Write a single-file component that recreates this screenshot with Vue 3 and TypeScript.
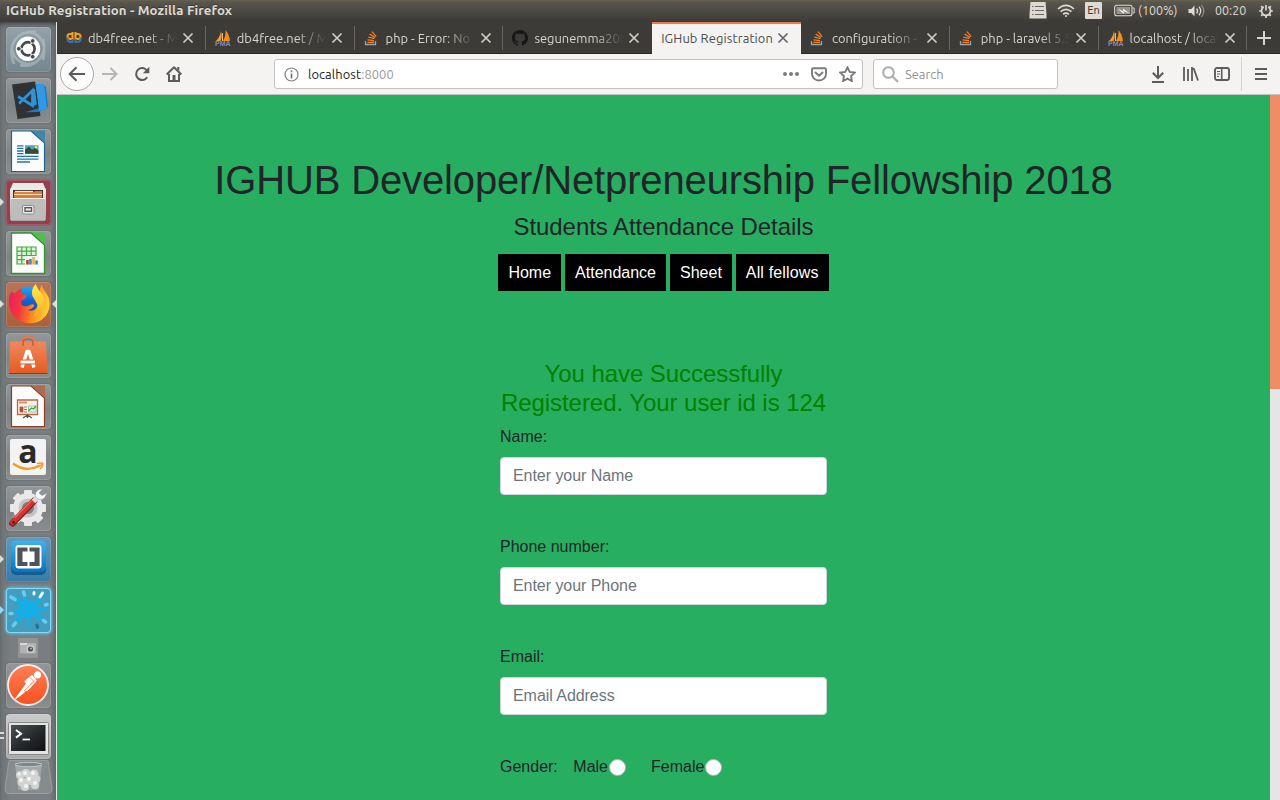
<script setup lang="ts">
type Favicon = 'db' | 'pma' | 'so' | 'gh' | ''
interface Tab { title: string; icon: Favicon; active?: boolean }

const tabs: Tab[] = [
  { title: 'db4free.net - MySQL', icon: 'db' },
  { title: 'db4free.net / MySQL', icon: 'pma' },
  { title: 'php - Error: No query', icon: 'so' },
  { title: 'segunemma2003', icon: 'gh' },
  { title: 'IGHub Registration', icon: '', active: true },
  { title: 'configuration - PHP', icon: 'so' },
  { title: 'php - laravel 5.5', icon: 'so' },
  { title: 'localhost / localhost', icon: 'pma' },
]

const links: string[] = ['Home', 'Attendance', 'Sheet', 'All fellows']
const fields = [
  { label: 'Name:', hint: 'Enter your Name' },
  { label: 'Phone number:', hint: 'Enter your Phone' },
  { label: 'Email:', hint: 'Email Address' },
]
const teeth: number[] = [0, 45, 90, 135, 180, 225, 270, 315]
</script>

<template>
  <div class="desktop">
    <header class="panel">
      <span class="window-title">IGHub Registration - Mozilla Firefox</span>
      <div class="indicators">
        <svg class="i-list" width="18" height="17" viewBox="0 0 18 17"><path d="M1.5 0h15l1 12v4.5H.5V12z" fill="#dfdbd2" /><path d="M3 4.500h1.500M6 4.500h9M3 8.500h1.500M6 8.500h9M3 12.500h1.500M6 12.500h9" stroke="#6b6860" stroke-width="1.2" /></svg>
        <svg class="i-wifi" width="18" height="14" viewBox="0 0 18 14" fill="none" stroke="#dfdbd2" stroke-width="1.600"><path d="M1 5Q9-2.400 17 5M3.600 7.700q5.400-4.800 10.800 0M6.100 10.300q2.900-2.500 5.800 0" /><circle cx="9" cy="12" r="1" fill="#dfdbd2" stroke="none" /></svg>
        <span class="lang">En</span>
        <svg class="i-bat" width="21" height="13" viewBox="0 0 21 13"><rect x=".7" y="1.200" width="17.300" height="10.600" rx="2" fill="none" stroke="#dfdbd2" stroke-width="1.100" /><rect x="2.500" y="3" width="13.700" height="7" fill="#96938b" /><path d="M18.800 4h1.400v5h-1.400" fill="none" stroke="#dfdbd2" /><path d="M3.500 4.500 9.500 7.500 9 4.500l6.500 5-6-2.500.5 3z" fill="#fff" /></svg>
        <span class="pct">(100%)</span>
        <svg class="i-vol" width="17" height="14" viewBox="0 0 17 14" fill="none" stroke="#dfdbd2"><path d="M.5 5h2.800L6.500 1.600v10.800L3.300 9H.5z" fill="#dfdbd2" stroke="none" /><path d="M8.600 4.500q2 2.500 0 5M11 2.700q3.400 4.300 0 8.600" stroke-width="1.300" /><path d="M13.500 1q4.600 6 0 12" stroke="#96928a" stroke-width="1.200" /></svg>
        <span class="clock">00:20</span>
        <svg class="i-gear" width="14" height="14" viewBox="0 0 14 14" fill="none" stroke="#dfdbd2"><path d="M4.700 3.100a4.500 4.500 0 1 0 4.600 0" stroke-width="1.700" /><path d="M7 1v5.500" stroke-width="1.600" /><path d="M2.200 2.200l1.600 1.600M11.800 2.200l-1.600 1.600M.2 7h2M11.800 7h2M2.200 11.800l1.600-1.600M11.800 11.800l-1.600-1.600M7 12v2" stroke-width="1.700" /></svg>
      </div>
    </header>

    <div class="workspace">
      <aside class="launcher">
        <svg width="0" height="0" class="defs">
          <defs>
            <linearGradient id="fox" x1="0" y1=".3" x2="1" y2=".45"><stop offset="0" stop-color="#ec1c60" /><stop offset=".3" stop-color="#f5373c" /><stop offset=".62" stop-color="#ff8a1f" /><stop offset="1" stop-color="#ffd433" /></linearGradient>
            <linearGradient id="flame" x1="0" y1="0" x2="0" y2="1"><stop offset="0" stop-color="#fff04d" /><stop offset="1" stop-color="#ffa71f" /></linearGradient>
            <linearGradient id="globe" x1="0" y1="0" x2="0" y2="1"><stop offset="0" stop-color="#1fa6f3" /><stop offset=".5" stop-color="#1561d2" /><stop offset="1" stop-color="#2b3a96" /></linearGradient>
            <linearGradient id="bag" x1="0" y1="0" x2="0" y2="1"><stop offset="0" stop-color="#f0895d" /><stop offset="1" stop-color="#e35b20" /></linearGradient>
            <linearGradient id="blue" x1="0" y1="0" x2="0" y2="1"><stop offset="0" stop-color="#41b3ec" /><stop offset="1" stop-color="#0874c0" /></linearGradient>
            <linearGradient id="post" x1="0" y1="0" x2="0" y2="1"><stop offset="0" stop-color="#ff8055" /><stop offset="1" stop-color="#f9501e" /></linearGradient>
            <linearGradient id="steel" x1="0" y1="0" x2="0" y2="1"><stop offset="0" stop-color="#eeeeec" /><stop offset="1" stop-color="#a5a5a3" /></linearGradient>
            <linearGradient id="screen" x1="0" y1="0" x2="1" y2="1"><stop offset="0" stop-color="#4b5254" /><stop offset=".55" stop-color="#24282a" /><stop offset="1" stop-color="#111" /></linearGradient>
          </defs>
        </svg>

        <div class="tile dash"><svg viewBox="0 0 45 45">
          <path d="M8 37C0 17 12 3 30 5M15 7C31 1 42 14 37 33M37 12c5 16-8 30-23 26M6 18C5 35 22 41 32 34" fill="none" stroke="#bbc7ca" stroke-width="2.600" opacity=".55" />
          <circle cx="22" cy="21.800" r="12.200" fill="#fff" /><circle cx="22" cy="21.800" r="6.600" fill="none" stroke="#434b4e" stroke-width="2.700" />
          <path d="M22 21.800H11M22 21.800l5.500-9.500M22 21.800l5.500 9.500" stroke="#fff" stroke-width="1.200" />
          <g fill="#434b4e" stroke="#fff" stroke-width=".8"><circle cx="12.800" cy="21.800" r="2.300" /><circle cx="26.700" cy="13.900" r="2.300" /><circle cx="26.700" cy="29.700" r="2.300" /></g>
        </svg></div>

        <div class="tile"><svg viewBox="0 0 45 45">
          <path d="M6 6.500 29 3.500 34.500 38 11.500 41z" fill="#303133" />
          <path d="M30 6h6l4 3 2 20-9 5L19 34.300 33.500 30z" fill="#1c79c9" /><path d="M30 6h8l3 24-8 3z" fill="#2f9ae6" />
          <path d="M12 18.500 26.500 27.500V12.500L13 25.500" fill="none" stroke="#2d94dc" stroke-width="2.700" /><path d="M26 12l3-1.200 1.800 16-4.300 1.500z" fill="#2d94dc" />
        </svg></div>

        <div class="tile"><svg viewBox="0 0 45 45">
          <path d="M24 1.500h15V13z" fill="#4285ad" /><path d="M5.500 2H25l13.500 12v28.500h-33z" fill="#fcfcfc" stroke="#216796" stroke-width="1.200" />
          <rect x="19" y="16.200" width="13.500" height="8.500" fill="#4aa4d2" /><path d="M19 24.700v-4l4-3 3 3 3-2 3.500 3v3z" fill="#394a30" /><circle cx="30" cy="18" r="1.500" fill="#f3dc4e" />
          <path d="M11 16.800h6.500M11 19.400h6.500M11 22h6.500M11 24.600h6.500M11 27.400h21.500M11 30.200h21.500M11 33h13" stroke="#2175a8" stroke-width="1.300" />
        </svg></div>

        <div class="tile files"><i class="mark left"></i><svg viewBox="0 0 45 45">
          <path d="M7 3h30l3 7H4z" fill="#e9e9e7" /><rect x="4" y="8" width="36" height="33" rx="2" fill="url(#steel)" /><path d="M7 10h30v8H7z" fill="#45312c" />
          <path d="M8 12h19l3-1h6v7H8z" fill="#e27933" /><path d="M8 14.500h28" stroke="#f7dfb8" /><path d="M9 11.500h18" stroke="#faeed6" stroke-width="1.200" /><path d="M5 18h34v22H5z" fill="#bdbdbb" /><path d="M5 18.500h34" stroke="#f2f2f1" />
          <rect x="16.500" y="25.500" width="11.500" height="8.500" rx="1.500" fill="#eee" stroke="#8b8b8b" /><rect x="19" y="27.700" width="6.500" height="3.600" fill="#e6e6e6" stroke="#575757" stroke-width="1.400" />
        </svg></div>

        <div class="tile"><svg viewBox="0 0 45 45">
          <path d="M24 1.500h15V13z" fill="#56bb4c" /><path d="M5.500 2H25l13.500 12v28.500h-33z" fill="#fcfcfc" stroke="#30952c" stroke-width="1.300" />
          <path d="M11 16h19v17H11z" fill="#dff4dc" /><path d="M11 16h19v17H11zM15.800 16v17M20.500 16v17M25.200 16v17M11 20.200h19M11 24.500h19M11 28.700h19" fill="none" stroke="#47ab3f" stroke-width="1.200" /><path d="M19 25h13.500v9H19z" fill="#eef3f7" />
          <path d="M20.200 29h2.500v4.500h-2.500z" fill="#b13c1f" /><path d="M23.200 28h2.500v5.500h-2.500zM29.300 29.500h2.500v4h-2.500z" fill="#3a83c4" /><path d="M26.300 26h2.500v7.500h-2.500z" fill="#e6b333" />
        </svg></div>

        <div class="tile firefox"><i class="mark left"></i><i class="mark right"></i><svg viewBox="0 0 45 45">
          <circle cx="22" cy="19" r="14.500" fill="url(#globe)" />
          <path d="M5.500 9.500Q7 12 9.500 11q3-4 7-4.500-1.500 2-1 5 4 1 5 2.500-.5 2.500-5 4.500-1.500 4 2 5.500 3 1 6.500-1 3-1.500 4.500.5-2.500 4-7 4.500 7 2.500 10-4 2-6-1-11 3 1 4.500 4-3-7 .5-14 2 5 5 8.500 4 6 3 13.500-2 11-12 15-11 3.500-20-2.500-8-6-8.500-16Q2.500 14 5.500 9.500z" fill="url(#fox)" />
          <path d="M29.500 2q-5 6-3 12 3 5 5 9 0 8-6 12 9-1 12.500-9 2-7-1.500-13-5-6-7-11z" fill="url(#flame)" />
        </svg></div>

        <div class="tile"><svg viewBox="0 0 45 45">
          <path d="M16 13V8q0-4.500 6-4.500T28 8v5" fill="none" stroke="#e27852" stroke-width="2.300" /><path d="M4 8.500h36l1.500 31q0 1.500-2 1.500h-35Q3 41 3 39.500z" fill="url(#bag)" /><path d="M3 40.500h38.500" stroke="#9a3b1b" />
          <path d="M17 13v-3q0-4 5-4t5 4v3" fill="none" stroke="#b95534" stroke-width="1.200" /><path d="M16 34.500 21 18.500h2l5 16" fill="none" stroke="#fff" stroke-width="3.400" stroke-linejoin="round" /><path d="M14 26.500h16v5H14z" fill="#e9672f" /><path d="M14.500 29h14.500" stroke="#fff" stroke-width="2.800" />
        </svg></div>

        <div class="tile"><svg viewBox="0 0 45 45">
          <path d="M24 1.500h15V13z" fill="#a96d50" /><path d="M5.500 2H25l13.500 12v28.500h-33z" fill="#fcfcfc" stroke="#8d4021" stroke-width="1.200" /><path d="M11.500 16h20v14.500h-20z" fill="#fbf0e9" stroke="#bb6743" stroke-width="1.300" />
          <path d="M13 18.500h8" stroke="#d98e65" stroke-width="2" /><path d="M14 23h3v5h-3zM18 23h3M18 25.500h3M18 28h3" fill="#ae5535" stroke="#ae5535" stroke-width=".8" /><path d="M22.500 22h7.500v6h-7.500z" fill="#eaf5e4" stroke="#88a27b" stroke-width=".6" /><path d="M22.500 27l3-3 2 1 2.500-3" fill="none" stroke="#36a449" stroke-width="1.300" />
          <path d="M17 34l4.500-3 4.500 3M21.500 31v3" fill="none" stroke="#555" stroke-width="1.400" />
        </svg></div>

        <div class="tile"><svg viewBox="0 0 45 45">
          <rect x="4" y="4" width="36" height="36" rx="2" fill="#f3f3f3" /><text x="22" y="28" text-anchor="middle" class="amazon-a">a</text>
          <path d="M7 28.500q13 9.500 27 2" fill="none" stroke="#f79b1e" stroke-width="2.200" /><path d="M31 28.500q5-1 6 0 0 3-3 5.500M36.500 29l-3 2" fill="none" stroke="#f79b1e" stroke-width="1.500" />
        </svg></div>

        <div class="tile"><svg viewBox="0 0 45 45">
          <g fill="#e9e9e9"><circle cx="22" cy="22" r="15" /><rect v-for="t in teeth" :key="t" x="18" y="4" width="8" height="7" rx="1" :transform="`rotate(${t} 22 22)`" /></g>
          <circle cx="22" cy="22" r="9.500" fill="#c4c4c4" /><circle cx="22" cy="22" r="6" fill="#7c8082" />
          <path d="M6.500 37.200 28 15" stroke="#7f1414" stroke-width="6.500" stroke-linecap="round" /><path d="M6.500 36.700 27.500 15" stroke="#d23430" stroke-width="5" stroke-linecap="round" /><path d="M9 31.500 25.500 14.500" stroke="#f06b63" stroke-width="1.300" />
          <path d="M27.500 15.500l5-5" stroke="#dedede" stroke-width="5" /><path d="M36.500 3q-7 0-7.500 7 4 6 9.500 2l2.500-5-5 2.500-3-2.500z" fill="#f8f8f8" stroke="#999" stroke-width=".6" /><circle cx="7.500" cy="36.500" r="1.400" fill="#651111" />
        </svg></div>

        <div class="tile brackets"><i class="mark left"></i><svg viewBox="0 0 45 45">
          <rect x="5" y="5" width="35" height="33" rx="5" fill="#125d96" /><rect x="5" y="3.500" width="35" height="31.500" rx="5" fill="url(#blue)" /><rect x="9.500" y="8" width="26" height="23.500" rx="3" fill="#fff" />
          <rect x="11.300" y="10.500" width="22.300" height="18.500" fill="#505459" /><rect x="16.500" y="14.500" width="12" height="10.500" fill="#fff" /><path d="M22.500 10v5.500M22.500 24v6" stroke="#fff" stroke-width="2" />
        </svg></div>

        <div class="tile splash"><i class="mark left bluish"></i><svg viewBox="0 0 45 45">
          <ellipse cx="22" cy="21.500" rx="10" ry="8.500" fill="#16aee6" />
          <g stroke="#16aee6" stroke-linecap="round" fill="none"><path d="M16 17 7 9.500M20 14 18 6M29 15l7-7M30 22l10-1M29 26l9 7M23 28l-1 10M17 27l-8 9M13 23l-8 2" stroke-width="3" /><path d="M18 17l-6-5M28 17l5-5M28 25l5 4M17 25l-4 5" stroke-width="5" /></g>
          <g stroke="#69cdf0" stroke-width="3.600" stroke-linecap="round"><path d="M5 9l4 2.500M17.500 4l1 3M4 25.500h2M37.500 32.500l2 1.500M7.500 37.500l2-2.500M39.500 17l1.500-.5" /></g><path d="M36.500 5l-2.500 4M28 4.500v1.500" stroke="#e5f8ff" stroke-width="3" stroke-linecap="round" /><path d="M31 37l.5 2.500" stroke="#17769f" stroke-width="3.200" stroke-linecap="round" />
        </svg></div>

        <svg class="mini" width="20" height="20" viewBox="0 0 20 20"><rect width="20" height="20" fill="#929494" /><rect x="2" y="5" width="16" height="10.500" rx="1" fill="#b1b2b2" /><path d="M2 6h7" stroke="#d9d9d9" stroke-width="2" /><circle cx="12.500" cy="11" r="4" fill="#d0d0d0" /><circle cx="12.500" cy="11" r="2.600" fill="#4f5356" /><circle cx="13" cy="10.500" r="1" fill="#a8bac5" /></svg>

        <div class="tile"><svg viewBox="0 0 45 45">
          <circle cx="22" cy="22" r="20" fill="url(#post)" stroke="#f5eeea" stroke-width="1.800" />
          <circle cx="31.500" cy="11.800" r="3.600" fill="#fff" /><path d="M28 14 20 20.500" stroke="#fff" stroke-width="6" /><path d="M21 19l4 3-7 8-8.500 6.500-.5-1 6-8z" fill="#fff" /><path d="M29.500 17.500 21 27" stroke="#fff" stroke-width="2.200" stroke-linecap="round" />
          <path d="M28.500 18 18 28M24 14.500l4 4" fill="none" stroke="#ff7547" stroke-width=".8" />
        </svg></div>

        <div class="tile terminal"><i class="dash-mark"></i><svg viewBox="0 0 45 45">
          <rect x="2.500" y="8.500" width="40" height="32" rx="1" fill="#e4e4e2" stroke="#888" /><rect x="5" y="11" width="34.500" height="26" fill="url(#screen)" /><path d="M10 16l5 3.800-5 3.800" fill="none" stroke="#fff" stroke-width="2" /><path d="M16.500 25.500H24" stroke="#fff" stroke-width="1.700" />
        </svg></div>

        <div class="trash"><svg width="49" height="34" viewBox="0 0 49 34">
          <path d="M5 .5h39l4 28q0 5-4 5H5q-4 0-4-5z" fill="#92999b" fill-opacity=".5" stroke="#9a9fa0" /><path d="M11 4h27l-3 24q0 2-3 2H17q-3 0-3-2z" fill="#b5babb" opacity=".6" /><ellipse cx="24.500" cy="4.500" rx="13.500" ry="2.200" fill="#7f8688" stroke="#c3c8c8" />
          <g fill="#d3d4d2"><circle cx="16" cy="15" r="4" /><circle cx="22" cy="13" r="4" /><circle cx="30" cy="14" r="4.500" /><circle cx="33" cy="19" r="3.500" /><circle cx="18" cy="22" r="4.500" /><circle cx="26" cy="20" r="5" /><circle cx="31" cy="25" r="4" /><circle cx="21" cy="27" r="4" /></g>
          <g fill="#f5f5f3"><circle cx="21" cy="13" r="2" /><circle cx="29" cy="13" r="2" /><circle cx="17" cy="20" r="2" /><circle cx="25" cy="19" r="2" /><circle cx="31" cy="23" r="2" /><circle cx="22" cy="26" r="2" /><circle cx="15" cy="14" r="1.500" /></g>
        </svg></div>
      </aside>

      <main class="browser">
        <nav class="tabs">
          <div v-for="t in tabs" :key="t.title" class="tab" :class="{ active: t.active }">
            <svg v-if="t.icon === 'db'" class="favicon" viewBox="0 0 16 16" fill="none" stroke-width="2.100"><path d="M6.500 2v7H4a2.500 2.500 0 0 1 0-5h2.500M9.500 2v7H12a2.500 2.500 0 0 0 0-5H9.500" stroke="#f5a21b" /><path d="M1.300 7.500q0 4.500 3.500 4.500h1.700V9M14.800 7.500q0 4.500-3.500 4.500H9.500V9" stroke="#3672ad" /></svg>
            <svg v-else-if="t.icon === 'pma'" class="favicon" viewBox="0 0 16 16"><path d="M6 1q1.500 6-.5 10H1q4-4 5-10z" fill="#f19b32" /><path d="M10.500 0q4 5 4.500 11H8q3-5 2.500-11z" fill="#f28c1b" /><path d="M7.500 3v8" stroke="#e8bc75" /><text x="0" y="15.500" class="pma-word">PMA</text></svg>
            <svg v-else-if="t.icon === 'so'" class="favicon" viewBox="0 0 16 16" fill="none"><path d="M1.500 11v3.500h10V11" stroke="#9da4a9" stroke-width="1.300" /><path d="M3.500 12.300h6.500M3.600 9.900l6.500.7M4.200 7l6.200 1.700M5.700 4.100l5.400 3.400M8 1.700l4.200 5" stroke="#f48024" stroke-width="1.250" /></svg>
            <svg v-else-if="t.icon === 'gh'" class="favicon" viewBox="0 0 16 16"><path fill="#181717" d="M8 0C3.580 0 0 3.580 0 8c0 3.540 2.290 6.530 5.470 7.590.4.070.55-.17.55-.38v-1.490c-2.010.37-2.530-.49-2.690-.94-.09-.23-.48-.94-.82-1.130-.28-.15-.68-.52-.01-.53.63-.01 1.080.58 1.230.82.72 1.210 1.870.87 2.330.66.070-.52.28-.87.51-1.070-1.780-.2-3.640-.89-3.640-3.950 0-.87.31-1.590.82-2.150-.08-.2-.36-1.020.08-2.120 0 0 .67-.21 2.200.82a7.600 7.600 0 0 1 4 0c1.530-1.040 2.200-.82 2.200-.82.44 1.100.16 1.920.08 2.120.51.56.82 1.270.82 2.150 0 3.070-1.870 3.750-3.650 3.950.29.25.54.73.54 1.480v2.200c0 .21.15.46.55.38A8 8 0 0 0 8 0z" /></svg>
            <span class="tab-title">{{ t.title }}</span>
            <svg class="close" width="12" height="12" viewBox="0 0 12 12"><path d="M1.500 1.500l9 9m0-9l-9 9" stroke="currentColor" stroke-width="1.700" /></svg>
          </div>
          <div class="new-tab"><svg width="14" height="14" viewBox="0 0 14 14"><path d="M7 0v14M0 7h14" stroke="#d8d6d0" stroke-width="2" /></svg></div>
        </nav>

        <div class="toolbar">
          <div class="back"><svg width="18" height="16" viewBox="0 0 18 16"><path d="M17 8H2M8.500 1.300 1.700 8l6.800 6.700" fill="none" stroke="#5b5b5b" stroke-width="2" /></svg></div>
          <svg class="fwd" width="16" height="14" viewBox="0 0 16 14"><path d="M0 7h14M8.500 1l6 6-6 6" fill="none" stroke="#b6b5b4" stroke-width="2" /></svg>
          <svg class="reload" width="16" height="16" viewBox="0 0 16 16"><path d="M13.200 11.200A6 6 0 1 1 13 4.500" fill="none" stroke="#5b5b5b" stroke-width="2" /><path d="M15.300.8v6.500H8.800z" fill="#5b5b5b" /></svg>
          <svg class="home" width="16" height="16" viewBox="0 0 16 16"><path d="M.7 8.500 8 1.300l7.300 7.200" fill="none" stroke="#5b5b5b" stroke-width="2" stroke-linejoin="round" /><path d="M3 8v7h10V8" fill="none" stroke="#5b5b5b" stroke-width="2" /><path d="M6.500 9h3v6h-3z" fill="#5b5b5b" /><path d="M11.300 1h2v4l-2-2z" fill="#5b5b5b" /></svg>
          <div class="urlbar">
            <svg width="15" height="15" viewBox="0 0 15 15"><circle cx="7.500" cy="7.500" r="6.500" fill="none" stroke="#808080" stroke-width="1.200" /><path d="M7.500 6.500v5M7.500 3.400v1.800" stroke="#777" stroke-width="1.700" /></svg>
            <span class="url">localhost<em>:8000</em></span>
            <svg class="dots" width="16" height="4" viewBox="0 0 16 4" fill="#7b7b7b"><circle cx="2" cy="2" r="2" /><circle cx="8" cy="2" r="2" /><circle cx="14" cy="2" r="2" /></svg>
            <svg width="16" height="15" viewBox="0 0 16 15" fill="none" stroke="#7b7b7b" stroke-width="1.900"><path d="M2.200 1.200h11.600q1.200 0 1.200 1.200V7a7 6.500 0 0 1-14 0V2.400q0-1.200 1.200-1.200z" /><path d="M4.500 5.500 8 8.700l3.500-3.200" stroke-linecap="round" /></svg>
            <svg class="star" width="17" height="16" viewBox="0 0 17 16"><path d="M8.500 1.300l2.200 4.600 5 .7-3.600 3.500.8 5-4.400-2.400-4.400 2.400.8-5L1.300 6.600l5-.7z" fill="none" stroke="#7b7b7b" stroke-width="1.900" /></svg>
          </div>
          <div class="search"><svg width="17" height="17" viewBox="0 0 17 17"><circle cx="6.500" cy="6.500" r="5.300" fill="none" stroke="#adadad" stroke-width="2" /><path d="M10.500 10.500l5.500 5.500" stroke="#adadad" stroke-width="2.200" /></svg><span>Search</span></div>
          <div class="actions">
            <svg width="12" height="17" viewBox="0 0 12 17"><path d="M6 0v12M.8 6.800 6 12l5.200-5.200M0 16h12" fill="none" stroke="#5b5b5b" stroke-width="2" /></svg>
            <svg class="library" width="16" height="14" viewBox="0 0 16 14"><path d="M1 0v14M5 2v12M9 0v14M10.500 1l4.500 12.500" fill="none" stroke="#5b5b5b" stroke-width="1.800" /></svg>
            <svg class="sidebar" width="16" height="14" viewBox="0 0 16 14" fill="none" stroke="#5b5b5b"><rect x="1" y="1" width="14" height="12" rx="2" stroke-width="1.900" /><path d="M7.700 1v12" stroke-width="1.600" /><path d="M3 4.500h3M3 7h3M3 9.500h2" stroke-width="1" /></svg>
          </div>
          <div class="menu"><svg width="12" height="12" viewBox="0 0 12 12"><path d="M0 1h12M0 6h12M0 11h12" stroke="#5b5b5b" stroke-width="1.900" /></svg></div>
        </div>

        <div class="viewport">
          <div class="page">
            <h1>IGHUB Developer/Netpreneurship Fellowship 2018</h1>
            <h4>Students Attendance Details</h4>
            <div class="links"><a v-for="l in links" :key="l">{{ l }}</a></div>
            <form class="form">
              <h4 class="success">You have Successfully Registered. Your user id is 124</h4>
              <div v-for="f in fields" :key="f.label" class="group">
                <label>{{ f.label }}</label>
                <input type="text" :placeholder="f.hint" />
              </div>
              <div class="gender"><span class="g-label">Gender:</span><span>Male</span><i class="radio"></i><span class="female">Female</span><i class="radio"></i></div>
            </form>
          </div>
          <div class="scrollbar"><div class="thumb"></div></div>
        </div>
      </main>
    </div>
  </div>
</template>

<style>
html, body { margin: 0; overflow: hidden; }
</style>

<style scoped>
* { box-sizing: border-box; }
svg { display: block; flex: none; }
.desktop { width: 1280px; height: 800px; overflow: hidden; display: flex; flex-direction: column; font-family: Ubuntu, "Noto Sans", sans-serif; }
.panel { height: 22px; flex: none; display: flex; align-items: flex-start; justify-content: space-between; padding: 0 7px 0 6px; background: linear-gradient(#66634f 0, #59564e 2px, #3d3c38 21px); color: #dfdbd2; font-size: 12.5px; line-height: 21px; }
.window-title { font-weight: 700; font-size: 13.2px; letter-spacing: 0.14px; white-space: nowrap; text-shadow: 0 -1px #38362f; }
.indicators { display: flex; align-items: center; height: 21px; white-space: nowrap; }
.i-wifi { margin-left: 10px; }
.lang { margin-left: 10px; width: 17px; height: 17px; border-radius: 1px; background: #dfdbd2; color: #3c3b37; font: 10px/17px "DejaVu Sans", sans-serif; text-align: center; }
.i-bat { margin-left: 12px; }
.pct { margin-left: 3px; width: 41px; }
.i-vol { margin-left: 9px; }
.clock { margin-left: 10px; width: 33px; }
.i-gear { margin-left: 11px; }
.workspace { display: flex; flex: 1; min-height: 0; }
.launcher { position: relative; width: 57px; flex: none; padding: 5px 0 0 6px; border-right: 1px solid #e6e7e7; background: linear-gradient(90deg, #6e7375, #7a7e80 20%, #7a7e80 88%, #676c6e); box-shadow: inset 0 4px 4px -2px #3d4144; }
.defs { position: absolute; }
.tile { position: relative; width: 45px; height: 45px; margin-bottom: 6px; border-radius: 4px; background: linear-gradient(#93989a, #7f8385 55%, #8a8d8e); box-shadow: inset 0 0 0 1px rgba(255,255,255,.13), 0 0 2px rgba(40,45,48,.5); }
.tile svg { width: 45px; height: 45px; }
.dash { background: linear-gradient(#93a2a8, #74868e); }
.files { background: #94404e; }
.firefox { background: linear-gradient(#b8755a, #a9603d); }
.brackets { background: linear-gradient(#6398b9, #397ba7); }
.splash { background: #459dbe; box-shadow: inset 0 0 0 1px #84daf7, 0 0 3px 1px #4cc2ee; margin-bottom: 5px; }
.mini { margin: 0 0 5px 12px; }
.terminal { background: linear-gradient(#c9caca, #aaacac); margin-bottom: 1px; }
.mark { position: absolute; top: 18px; border: 4px solid transparent; }
.left { left: -6px; border-left-color: #dcdddd; border-right: 0; }
.right { right: -5px; border-right-color: #dcdddd; border-left: 0; }
.bluish { border-left-color: #8ddcf8; }
.dash-mark { position: absolute; left: -6px; top: 18px; width: 4px; height: 7px; border-top: 2px solid #d8dada; border-bottom: 2px solid #d8dada; }
.trash { margin-left: -2px; }
.amazon-a { font: bold 32px "Open Sans", sans-serif; fill: #292929; }
.browser { flex: 1; min-width: 0; display: flex; flex-direction: column; }
.tabs { height: 32px; flex: none; display: flex; background: #3c3b37; border-bottom: 1px solid #272623; }
.tab { position: relative; flex: 1; min-width: 0; display: flex; align-items: center; padding: 0 11.75px 0 9px; color: #d8d6d0; }
.tab::after { content: ""; position: absolute; right: 0; top: 4px; height: 24px; width: 1px; background: #696763; }
.tab.active::after, .tab:nth-child(4)::after { display: none; }
.tab.active { background: #f4f3f2; height: 32px; border-top: 2px solid #f07746; color: #4d4d4d; padding-bottom: 2px; }
.favicon { width: 16px; height: 16px; margin-right: 6px; }
.pma-word { font: bold 7px "Liberation Sans", sans-serif; fill: #8589b7; }
.tab-title { flex: 1; min-width: 0; margin-right: 5px; overflow: hidden; white-space: nowrap; font-size: 12.9px; line-height: 18px; -webkit-mask-image: linear-gradient(90deg, #000 calc(100% - 30px), transparent); mask-image: linear-gradient(90deg, #000 calc(100% - 30px), transparent); }
.active .tab-title { -webkit-mask-image: none; mask-image: none; letter-spacing: 0.12px; margin-right: 0; }
.close { color: #d0cec8; }
.active .close { color: #666; }
.new-tab { width: 32.6px; display: flex; align-items: center; justify-content: center; }
.toolbar { height: 41px; flex: none; display: flex; align-items: center; background: #f4f3f2; border-bottom: 1px solid #c5c3c1; padding-left: 3px; }
.back { width: 34px; height: 34px; border-radius: 50%; border: 1px solid #a9a9a8; background: #fcfcfc; display: flex; align-items: center; justify-content: center; }
.fwd { margin-left: 8px; }
.reload { margin-left: 16px; }
.home { margin-left: 16px; }
.urlbar, .search { height: 30px; background: #fff; border: 1px solid #c4c2c0; border-radius: 3px; display: flex; align-items: center; font-size: 12.9px; }
.urlbar { width: 589px; margin-left: 92px; padding: 0 6px 0 9px; }
.url { flex: 1; margin-left: 9px; color: #222; letter-spacing: 0.08px; }
.url em { font-style: normal; color: #999; }
.dots { margin-right: 12px; }
.star { margin-left: 12px; }
.search { width: 185px; margin-left: 10px; padding-left: 8px; color: #929292; }
.search span { margin-left: 6px; }
.actions { display: flex; align-items: center; margin-left: 94px; }
.library { margin-left: 19px; }
.sidebar { margin-left: 15px; }
.menu { height: 34px; margin-left: 11px; padding-left: 13px; border-left: 1px solid #d6d4d2; display: flex; align-items: center; }
.viewport { flex: 1; min-height: 0; display: flex; }
.page { flex: 1; background: #28ae60; padding-top: 61px; overflow: hidden; color: #212529; font: 16px/24px "Liberation Sans", Arial, sans-serif; text-align: center; }
h1 { margin: 0 0 9px; font-size: 40px; font-weight: 400; line-height: 48px; letter-spacing: -0.14px; }
h4 { margin: 0; font-size: 24px; font-weight: 400; line-height: 28.8px; letter-spacing: -0.055px; }
.links { display: flex; justify-content: center; gap: 4px; margin-top: 12px; }
.links a { height: 37px; padding: 0 10px; line-height: 37px; background: #000; color: #fff; }
.links a:last-child { letter-spacing: 0.15px; }
.form { width: 327px; margin: 69px auto 0; text-align: left; }
.form .success { color: #008000; text-align: center; margin-bottom: 8px; }
.group { height: 110px; }
label { display: block; margin-bottom: 8px; }
input { display: block; width: 100%; height: 38px; padding: 6px 12px; border: 1px solid #ced4da; border-radius: 4px; background: #fff; font: inherit; color: #495057; }
input::placeholder { color: #6c757d; opacity: 1; letter-spacing: -0.05px; }
.gender { display: flex; align-items: center; }
.g-label { margin-right: 15.5px; }
.radio { width: 17px; height: 17px; border-radius: 50%; background: #fff; border: 1px solid #b5b1ae; margin: 1px 0 0 .5px; }
.female { margin-left: 25.5px; }
.scrollbar { width: 10px; background: #e5e5e5; }
.thumb { height: 294px; background: #f08d67; }
</style>
